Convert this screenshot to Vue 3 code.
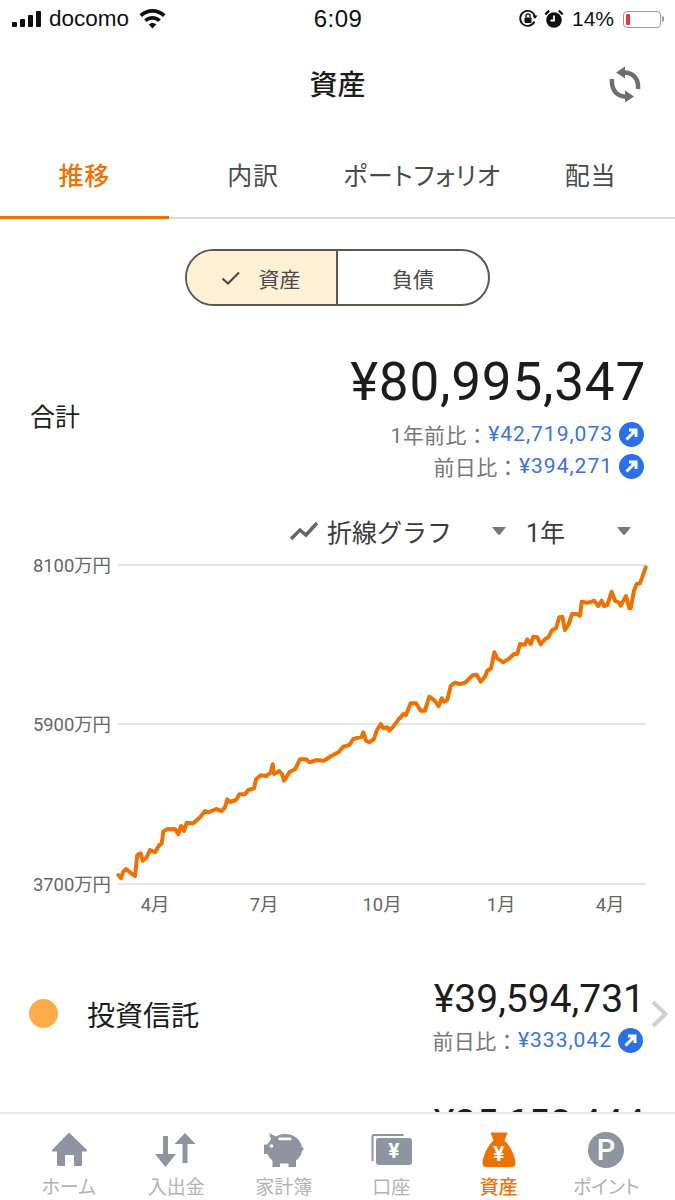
<script setup>
const zoomA = [[55,525],[63,535],[70,515],[78,507],[90,517],[105,528],[112,465],[122,460],[128,482],[140,472],[150,450],[165,457],[178,435],[185,430],[190,395],[200,388],[225,387],[235,403],[243,378],[252,393],[260,368],[280,370],[300,352],[315,333],[325,337],[348,327],[365,333],[375,322],[382,298],[390,306],[408,300],[418,283],[435,283],[445,270],[462,265],[468,238],[482,226],[498,228],[512,218],[518,193],[522,222],[538,213],[546,222],[552,242],[570,215],[585,208],[600,178],[618,178],[628,187],[650,180],[672,182],[695,167],[715,157],[730,140],[748,135],[760,117],[785,110],[790,97],[798,122],[808,127],[822,117],[830,92],[842,72],[850,85],[862,82],[868,92],[880,80],[898,55]]
const zoomB = [[60,505],[70,492],[78,495],[92,460],[108,460],[122,482],[135,482],[148,440],[162,450],[176,468],[185,445],[192,455],[202,450],[212,408],[225,398],[240,402],[255,398],[278,376],[290,374],[302,395],[315,380],[322,362],[333,355],[343,307],[352,325],[370,337],[385,328],[402,312],[412,312],[420,282],[435,284],[442,268],[452,282],[460,260],[472,262],[482,283],[495,268],[505,262],[517,240],[528,235],[538,202],[547,200],[555,240],[565,225],[576,192],[590,192],[600,197],[605,155],[620,158],[630,157],[642,152],[655,168],[665,152],[672,168],[682,165],[695,125],[705,152],[718,158],[722,167],[738,138],[748,175],[752,175],[762,122],[770,102],[780,100],[797,52]]
const line = [
  ...zoomA.map(([x, y]) => [100 + x / 3, 700 + y / 3]),
  ...zoomB.map(([x, y]) => [380 + x / 3, 550 + y / 3]),
].map(([x, y]) => `${x.toFixed(1)},${y.toFixed(1)}`).join(' ')

const tabs = [
  { label: '推移', active: true },
  { label: '内訳' },
  { label: 'ポートフォリオ' },
  { label: '配当' },
]
const grid = [
  { y: 565, label: '8100万円' },
  { y: 724, label: '5900万円' },
  { y: 884, label: '3700万円' },
]
const months = [
  { x: 155, label: '4月' },
  { x: 264, label: '7月' },
  { x: 382, label: '10月' },
  { x: 501, label: '1月' },
  { x: 610, label: '4月' },
]
</script>

<template>
  <div class="page">
    <div class="status">
      <div class="st-left">
        <svg class="signal" width="30" height="16" viewBox="0 0 30 16">
          <rect x="0" y="11" width="5" height="5" rx="1" />
          <rect x="8" y="8" width="5" height="8" rx="1" />
          <rect x="16" y="4" width="5" height="12" rx="1" />
          <rect x="24" y="0" width="5" height="16" rx="1" />
        </svg>
        <span class="carrier">docomo</span>
        <svg class="wifi" width="27" height="20" viewBox="0 0 27 20">
          <path d="M13.5 0C8.400 0 3.900 2 0.500 5.300L3 8C5.800 5.300 9.500 3.700 13.500 3.700S21.200 5.300 24 8L26.500 5.300C23.100 2 18.600 0 13.500 0Z" />
          <path d="M13.500 7C10.300 7 7.400 8.300 5.200 10.400L7.800 13C9.300 11.600 11.300 10.700 13.500 10.700S17.700 11.600 19.200 13L21.800 10.400C19.600 8.300 16.700 7 13.500 7Z" />
          <path d="M13.500 14C12 14 10.700 14.600 9.700 15.500L13.500 19.500L17.300 15.500C16.300 14.600 15 14 13.500 14Z" />
        </svg>
      </div>
      <span class="time">6:09</span>
      <div class="st-right">
        <svg width="20" height="20" viewBox="0 0 20 20" class="st-icon">
          <path class="lock-ring" d="M16.500 12.500A7.500 7.500 0 1 1 16.800 7" />
          <path d="M19.500 6.500L14.500 6.500L17 10Z" />
          <rect x="6.500" y="8.500" width="7" height="5.500" rx="1" />
          <path class="lock-ring thin" d="M8 8.500V7a2 2 0 0 1 4 0v1.500" />
        </svg>
        <svg width="20" height="20" viewBox="0 0 20 20" class="st-icon alarm">
          <circle cx="10" cy="11" r="7.800" />
          <path class="alarm-hand" d="M10 6.500V11.500H6.500" />
          <path d="M0.500 4.500L4.500 0.800L6 2.500L2 6.200ZM19.500 4.500L15.500 0.800L14 2.500L18 6.200Z" />
        </svg>
        <span class="pct">14%</span>
        <div class="battery"><span class="battery-fill"></span></div>
        <span class="battery-cap"></span>
      </div>
    </div>

    <header class="nav">
      <h1 class="nav-title">資産</h1>
      <svg class="refresh" width="32" height="38" viewBox="0 0 32 38">
        <path class="refresh-arc" d="M14 6.500C23 6 30 12 29 23" />
        <path class="refresh-head" d="M7 6.500L16 0.500V12.500Z" />
        <path class="refresh-arc" d="M18 30.500C9 31 2 25 3 13" />
        <path class="refresh-head" d="M25 30.500L16 24.500V36.500Z" />
      </svg>
    </header>

    <nav class="tabs">
      <div v-for="t in tabs" :key="t.label" class="tab" :class="{ active: t.active }">{{ t.label }}</div>
    </nav>

    <main class="main">
      <div class="toggle-wrap">
        <div class="toggle">
          <div class="toggle-item on">
            <svg width="20" height="14" viewBox="0 0 20 14"><path d="M1.500 7.500L7 12.500L18 1.500" /></svg>
            <span>資産</span>
          </div>
          <div class="toggle-item">負債</div>
        </div>
      </div>

      <section class="summary">
        <div class="sum-label">合計</div>
        <div class="sum-right">
          <div class="sum-amount">¥80,995,347</div>
          <div class="delta">
            <span class="delta-label">1年前比：</span><span class="delta-value">¥42,719,073</span>
            <svg class="up" width="25" height="25" viewBox="0 0 25 25"><circle cx="12.500" cy="12.500" r="12.500" /><path d="M7.500 17.500L16.500 8.500M10 8H17V15" /></svg>
          </div>
          <div class="delta">
            <span class="delta-label">前日比：</span><span class="delta-value">¥394,271</span>
            <svg class="up" width="25" height="25" viewBox="0 0 25 25"><circle cx="12.500" cy="12.500" r="12.500" /><path d="M7.500 17.500L16.500 8.500M10 8H17V15" /></svg>
          </div>
        </div>
      </section>

      <div class="controls">
        <svg class="trend" width="30" height="20" viewBox="0 0 30 20"><path d="M2 18L11 9L17 14L28 2" /></svg>
        <span class="ctl-type">折線グラフ</span>
        <svg class="caret" width="14" height="8" viewBox="0 0 14 8"><path d="M0 0H14L8 7.500Q7 8 6 7.500Z" /></svg>
        <span class="ctl-range">1年</span>
        <svg class="caret" width="14" height="8" viewBox="0 0 14 8"><path d="M0 0H14L8 7.500Q7 8 6 7.500Z" /></svg>
      </div>

      <svg class="chart" width="675" height="400" viewBox="0 552 675 400">
        <g v-for="g in grid" :key="g.y">
          <line class="grid" x1="118" :y1="g.y" x2="646" :y2="g.y" />
          <text class="axis" x="111" :y="g.y + 7" text-anchor="end">{{ g.label }}</text>
        </g>
        <text v-for="m in months" :key="m.x" class="axis" :x="m.x" y="911" text-anchor="middle">{{ m.label }}</text>
        <polyline class="series" :points="line" />
      </svg>

      <section class="row">
        <span class="dot"></span>
        <span class="row-name">投資信託</span>
        <div class="row-right">
          <div class="row-amount">¥39,594,731</div>
          <div class="delta narrow">
            <span class="delta-label">前日比：</span><span class="delta-value">¥333,042</span>
            <svg class="up" width="25" height="25" viewBox="0 0 25 25"><circle cx="12.500" cy="12.500" r="12.500" /><path d="M7.500 17.500L16.500 8.500M10 8H17V15" /></svg>
          </div>
        </div>
        <svg class="chev" width="17" height="28" viewBox="0 0 17 28"><path d="M2 2L14.500 14L2 26" /></svg>
      </section>

      <section class="row next">
        <span class="dot-spacer"></span>
        <div class="row-right">
          <div class="row-amount">¥25,650,444</div>
        </div>
        <span class="chev-spacer"></span>
      </section>
    </main>

    <footer class="tabbar">
      <div class="tb-item">
        <svg class="tb-icon" width="40" height="38" viewBox="0 0 40 38">
          <path d="M19 2.500Q20 1.500 21 2.500L37.500 18.500Q39 20.500 36.500 20.500H33V33.500Q33 35 31.500 35H25V24H16V35H9.500Q8 35 8 33.500V20.500H4.500Q2 20.500 3.500 18.500Z" />
        </svg>
        <span>ホーム</span>
      </div>
      <div class="tb-item">
        <svg class="tb-icon" width="42" height="38" viewBox="0 0 42 38">
          <path d="M8 5H13V23H21L10.500 36L0 23H8Z" />
          <path d="M30 2L40.500 13H32.500V32H27.500V13H19.500Z" />
        </svg>
        <span>入出金</span>
      </div>
      <div class="tb-item">
        <svg class="tb-icon" width="42" height="38" viewBox="0 0 42 38">
          <path d="M6 2L13 5.500C16 3.500 19 3 22.500 3C31.500 3 38 9.500 39 16L41 18L39 20C38.500 24 36 27.500 33 29.500V36H25.500V32.500H17V36H9.500V29.500C7 27.500 5.500 25.500 4.500 23H1V13.500H4.500C5.500 11.500 6.500 10 8 8.800Z" />
          <rect class="tb-cut" x="15.500" y="6.500" width="13" height="2.800" rx="1" />
          <circle class="tb-cut" cx="8.500" cy="15" r="1.800" />
        </svg>
        <span>家計簿</span>
      </div>
      <div class="tb-item">
        <svg class="tb-icon" width="42" height="38" viewBox="0 0 42 38">
          <path class="wallet-back" d="M2.500 30V5.500Q2.500 4 4 4H33.500" />
          <rect x="6" y="7" width="36" height="27" rx="3" />
          <text class="tb-yen" x="24" y="27" text-anchor="middle">¥</text>
        </svg>
        <span>口座</span>
      </div>
      <div class="tb-item active">
        <svg class="tb-icon" width="36" height="38" viewBox="0 0 36 38">
          <path d="M9.500 1.500H26.500L23.500 9.500C28 13 34 24 34.500 32Q34.500 36 31 36H5Q1.500 36 1.500 32C2 24 8 13 12.500 9.500Z" />
          <text class="tb-yen" x="18" y="30" text-anchor="middle">¥</text>
        </svg>
        <span>資産</span>
      </div>
      <div class="tb-item">
        <svg class="tb-icon" width="38" height="38" viewBox="0 0 38 38">
          <circle cx="19" cy="19" r="18" />
          <text class="tb-p" x="19" y="29" text-anchor="middle">P</text>
        </svg>
        <span>ポイント</span>
      </div>
    </footer>
  </div>
</template>

<style>
html, body { margin: 0; background: #fff; }
</style>

<style scoped>
* { box-sizing: border-box; }
.page {
  width: 675px;
  height: 1200px;
  display: flex;
  flex-direction: column;
  overflow: hidden;
  background: #fff;
  color: #1c1c1c;
  font-family: Roboto, "Noto Sans CJK JP", sans-serif;
}

.status {
  height: 40px;
  flex: none;
  display: grid;
  grid-template-columns: 1fr auto 1fr;
  align-items: center;
  padding: 0 11px 2px 12px;
  font-family: "Liberation Sans", sans-serif;
  color: #111;
}
.st-left { display: flex; align-items: center; }
.signal { fill: #111; }
.carrier { font-size: 22.500px; margin-left: 7px; }
.wifi { fill: #111; margin-left: 10px; }
.time { font-size: 24px; font-weight: 500; letter-spacing: 0.5px; }
.st-right { display: flex; align-items: center; justify-content: flex-end; }
.st-icon { fill: #111; margin-right: 6px; }
.st-icon.alarm { margin-right: 8px; }
.lock-ring { fill: none; stroke: #111; stroke-width: 1.8; }
.lock-ring.thin { stroke-width: 1.4; }
.alarm-hand { fill: none; stroke: #fff; stroke-width: 1.8; }
.pct { font-size: 21px; }
.battery {
  width: 38px;
  height: 17px;
  margin-left: 9px;
  border: 1.5px solid #9a9a9a;
  border-radius: 4px;
  padding: 2px;
}
.battery-fill { display: block; width: 4px; height: 100%; background: #e8343f; border-radius: 1px; }
.battery-cap { width: 2px; height: 6px; margin-left: 1px; background: #9a9a9a; border-radius: 0 2px 2px 0; }

.nav {
  height: 90px;
  flex: none;
  position: relative;
  display: flex;
  align-items: center;
  justify-content: center;
  padding-bottom: 4px;
}
.nav-title { margin: 0; font-size: 28px; font-weight: 500; }
.refresh { position: absolute; right: 34px; top: 26px; }
.refresh-arc { fill: none; stroke: #6e6e6e; stroke-width: 4.500; }
.refresh-head { fill: #6e6e6e; }

.tabs {
  height: 89px;
  flex: none;
  display: grid;
  grid-template-columns: repeat(4, minmax(0, 1fr));
  border-bottom: 2px solid #dcdcdc;
}
.tab {
  height: 89px;
  display: flex;
  align-items: center;
  justify-content: center;
  padding-bottom: 2px;
  font-size: 25px;
  color: #4a4a4a;
  white-space: nowrap;
  font-feature-settings: "palt";
  letter-spacing: 0.8px;
}
.tab.active { color: #ee7203; font-weight: 500; box-shadow: inset 0 -3px 0 #ee7203; }

.main { flex: 1; min-height: 0; overflow: hidden; }

.toggle-wrap { display: flex; justify-content: center; padding-top: 30px; }
.toggle {
  width: 305px;
  height: 57px;
  display: grid;
  grid-template-columns: 151px 1fr;
  border: 2px solid #5f5650;
  border-radius: 29px;
  overflow: hidden;
  font-size: 21px;
  color: #4a4a4a;
}
.toggle-item { display: flex; align-items: center; justify-content: center; }
.toggle-item.on { background: #fff0d6; border-right: 2px solid #5f5650; gap: 18px; padding-right: 2px; }
.toggle-item svg { fill: none; stroke: #4a4540; stroke-width: 2; }

.summary {
  margin-top: 47px;
  padding: 0 31px 0 30px;
  display: flex;
  align-items: center;
  justify-content: space-between;
}
.sum-label { font-size: 25px; padding-bottom: 6px; }
.sum-right { display: flex; flex-direction: column; align-items: flex-end; }
.sum-amount { font-size: 53px; line-height: 59px; margin: 0 -2px 6px 0; letter-spacing: 0.8px; }
.delta { height: 32px; display: flex; align-items: center; font-size: 21px; }
.delta-label { color: #777; letter-spacing: 0.4px; }
.delta-value { color: #3a72dd; letter-spacing: 1px; }
.up { margin-left: 6px; flex: none; }
.up circle { fill: #2d6fe6; }
.up path { fill: none; stroke: #fff; stroke-width: 3; }

.controls {
  margin-top: 28px;
  height: 42px;
  display: flex;
  align-items: center;
  font-size: 25px;
  color: #3a3a3a;
  padding-left: 289px;
}
.trend { fill: none; stroke: #666; stroke-width: 3.500; }
.ctl-type { margin-left: 8px; width: 123px; white-space: nowrap; }
.caret { fill: #777; margin-left: 42px; }
.ctl-range { margin-left: 20px; width: 36px; white-space: nowrap; }
.ctl-range + .caret { margin-left: 55px; }

.chart { display: block; }
.grid { stroke: #dedede; stroke-width: 1.500; }
.axis { font-size: 18.400px; fill: #666; font-family: Roboto, "Noto Sans CJK JP", sans-serif; }
.series { fill: none; stroke: #ee7203; stroke-width: 4; stroke-linejoin: round; stroke-linecap: round; }

.row {
  height: 123px;
  padding: 0 7px 0 29px;
  display: flex;
  align-items: center;
}
.dot { width: 29px; height: 29px; border-radius: 50%; background: #ffab4a; flex: none; }
.dot-spacer { width: 29px; }
.row-name { margin-left: 29px; font-size: 28px; }
.row-right { margin-left: auto; padding-top: 3px; display: flex; flex-direction: column; align-items: flex-end; }
.row-amount { font-size: 39px; line-height: 50px; margin-right: -2px; }
.delta.narrow { height: 33px; }
.chev { margin-left: 8px; flex: none; fill: none; stroke: #cfcfcf; stroke-width: 4; }
.chev-spacer { width: 25px; flex: none; }
.row.next { align-items: flex-start; }
.row.next .row-right { padding-top: 24px; }

.tabbar {
  height: 88px;
  flex: none;
  border-top: 2px solid #e8e8e8;
  background: #fff;
  padding: 0 15px;
  display: grid;
  grid-template-columns: repeat(6, minmax(0, 1fr));
  position: relative;
}
.tb-item {
  display: flex;
  flex-direction: column;
  align-items: center;
  padding-top: 17px;
  font-size: 19px;
  color: #b3b3b3;
  white-space: nowrap;
  font-feature-settings: "palt";
}
.tb-item span { margin-top: 6px; line-height: 26px; }
.tb-icon { fill: #8e95a1; flex: none; }
.tb-cut { fill: #fff; }
.wallet-back { fill: none; stroke: #8e95a1; stroke-width: 2; }
.tb-yen { fill: #fff; font-size: 21px; font-weight: 700; font-family: Roboto, sans-serif; }
.tb-p { fill: #fff; font-size: 29px; font-weight: 500; font-family: Roboto, sans-serif; }
.tb-item.active { color: #ee7203; font-weight: 500; }
.tb-item.active .tb-icon { fill: #ee7203; }
</style>
